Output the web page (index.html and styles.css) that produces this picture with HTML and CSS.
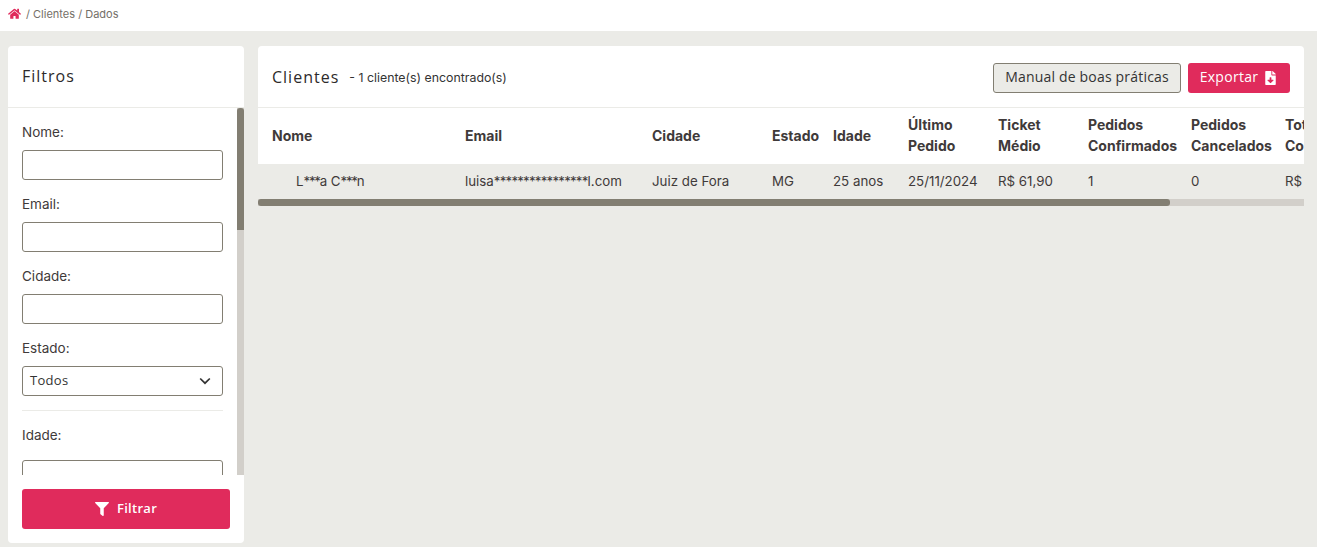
FILE: index.html
```html
<!DOCTYPE html>
<html lang="pt-BR">
<head>
<meta charset="utf-8">
<title>Clientes / Dados</title>
<link rel="stylesheet" href="styles.css">
</head>
<body>
<nav class="crumbs">
  <svg class="home" viewBox="0 0 576 512"><path d="M280.37 148.26L96 300.11V464a16 16 0 0 0 16 16l112.06-.29a16 16 0 0 0 15.92-16V368a16 16 0 0 1 16-16h64a16 16 0 0 1 16 16v95.64a16 16 0 0 0 16 16.05L464 480a16 16 0 0 0 16-16V300L295.67 148.26a12.19 12.19 0 0 0-15.3 0zM571.6 251.47L488 182.56V44.05a12 12 0 0 0-12-12h-56a12 12 0 0 0-12 12v72.61L318.47 43a48 48 0 0 0-61 0L4.34 251.47a12 12 0 0 0-1.6 16.9l25.5 31A12 12 0 0 0 45.15 301l235.22-193.74a12.19 12.19 0 0 1 15.3 0L530.9 301a12 12 0 0 0 16.9-1.6l25.5-31a12 12 0 0 0-1.7-16.93z"/></svg>
  <span>/ Clientes / Dados</span>
</nav>
<div class="layout">
  <aside class="filters">
    <h2 class="filters-title">Filtros</h2>
    <div class="filters-body">
      <form class="filters-form">
        <label class="field"><span>Nome:</span><input type="text"></label>
        <label class="field"><span>Email:</span><input type="text"></label>
        <label class="field"><span>Cidade:</span><input type="text"></label>
        <label class="field"><span>Estado:</span>
          <div class="select">Todos
            <svg viewBox="0 0 12 8"><path d="M1.2 1.5L6 6.2l4.8-4.7" fill="none" stroke="currentColor" stroke-width="1.7"/></svg>
          </div>
        </label>
        <hr class="divider">
        <label class="field field-age"><span>Idade:</span><input type="text"></label>
      </form>
      <div class="vbar"><div class="vbar-thumb"></div></div>
    </div>
    <div class="filters-foot">
      <button class="btn-primary btn-filter" type="button">
        <svg viewBox="0 0 512 512"><path d="M487.976 0H24.028C2.71 0-8.047 25.866 7.058 40.971L192 225.941V432c0 7.831 3.821 15.17 10.237 19.662l80 55.98C298.02 518.69 320 507.493 320 487.98V225.941l184.947-184.97C520.021 25.896 509.338 0 487.976 0z"/></svg>
        Filtrar
      </button>
    </div>
  </aside>
  <main class="content">
    <header class="content-head">
      <h1 class="content-title">Clientes</h1>
      <span class="content-count">- 1 cliente(s) encontrado(s)</span>
      <div class="actions">
        <button class="btn-outline" type="button">Manual de boas práticas</button>
        <button class="btn-primary btn-export" type="button">Exportar
          <svg viewBox="0 0 384 512"><path d="M224 136V0H24C10.7 0 0 10.7 0 24v464c0 13.3 10.7 24 24 24h336c13.3 0 24-10.7 24-24V160H248c-13.2 0-24-10.8-24-24zm76.45 211.36l-96.42 95.7c-6.65 6.61-17.39 6.61-24.04 0l-96.42-95.7C73.42 337.29 80.54 320 94.82 320H160v-80c0-8.84 7.16-16 16-16h32c8.84 0 16 7.16 16 16v80h65.18c14.28 0 21.4 17.29 11.27 27.36zM377 105L279.1 7c-4.5-4.5-10.6-7-17-7H256v128h128v-6.1c0-6.3-2.5-12.4-7-16.9z"/></svg>
        </button>
      </div>
    </header>
    <div class="table-wrap">
      <table class="clients">
        <colgroup>
          <col class="c1"><col class="c2"><col class="c3"><col class="c4"><col class="c5">
          <col class="c6"><col class="c7"><col class="c8"><col class="c9"><col class="c10">
        </colgroup>
        <thead>
          <tr>
            <th>Nome</th><th>Email</th><th>Cidade</th><th>Estado</th><th>Idade</th>
            <th>Último<br>Pedido</th><th>Ticket<br>Médio</th><th>Pedidos<br>Confirmados</th><th>Pedidos<br>Cancelados</th><th>Total<br>Compras</th>
          </tr>
        </thead>
        <tbody>
          <tr>
            <td class="name">L<span class="mask">***</span>a C<span class="mask">***</span>n</td><td>luisa<span class="mask">****************</span>l.com</td><td>Juiz de Fora</td><td>MG</td><td>25 anos</td>
            <td>25/11/2024</td><td>R$ 61,90</td><td>1</td><td>0</td><td>R$ 61,90</td>
          </tr>
        </tbody>
      </table>
    </div>
    <div class="hbar"><div class="hbar-thumb"></div></div>
  </main>
</div>
</body>
</html>
```

FILE: styles.css
```css
* { box-sizing: border-box; }
html, body { height: 100%; }
body {
  margin: 0;
  background: #ebebe7;
  color: #3f3a3a;
  font-family: Inter, "Liberation Sans", sans-serif;
  font-size: 13px;
  overflow: hidden;
}
.crumbs {
  height: 31px;
  background: #fff;
  display: flex;
  align-items: center;
  gap: 5px;
  padding: 0 8px 3px;
  font-size: 11px;
  color: #746f68;
}
.home { width: 13px; height: 11.5px; fill: #e02b5c; }
.layout {
  display: flex;
  align-items: flex-start;
  gap: 14px;
  padding: 15px 13px 0 8px;
}
.filters {
  width: 236px;
  height: 497px;
  flex: none;
  background: #fff;
  border-radius: 4px;
  display: flex;
  flex-direction: column;
  overflow: hidden;
}
.filters-title {
  margin: 0;
  height: 62px;
  padding: 0 14px 2px;
  display: flex;
  align-items: center;
  border-bottom: 1px solid #ebebe7;
  font-family: "Open Sans", sans-serif;
  font-size: 16px;
  font-weight: 400;
  letter-spacing: 1px;
  color: #2d2a2a;
}
.filters-body { height: 367px; display: flex; }
.filters-form { flex: 1; min-width: 0; overflow: hidden; padding: 15px 14px 0; }
.vbar { width: 7px; flex: none; background: #d2cfca; }
.vbar-thumb { height: 122px; background: #827e72; border-radius: 3px 3px 0 0; }
.field { display: block; margin-bottom: 15px; }
.field span { display: block; height: 18px; line-height: 18px; margin-bottom: 9px; font-size: 13.5px; }
.field input, .select {
  display: block;
  width: 100%;
  height: 30px;
  border: 1px solid #827e72;
  border-radius: 3px;
  background: #fff;
  padding: 0 7px;
}
.select {
  display: flex;
  align-items: center;
  justify-content: space-between;
  padding: 0 11px 2px 7px;
  font-family: "Open Sans", sans-serif;
  letter-spacing: .3px;
  color: #333;
}
.select svg { width: 12px; height: 8px; color: #333; margin-top: 2px; }
.divider { border: 0; border-top: 1px solid #ebebe7; margin: -1px 0 15px; }
.field-age span { margin-bottom: 16px; }
.filters-foot { padding: 14px; flex: 1; }
.btn-primary {
  border: 0;
  border-radius: 3px;
  background: #e02b5c;
  color: #fff;
  display: flex;
  align-items: center;
  justify-content: center;
  font-family: "Open Sans", sans-serif;
  font-size: 14px;
  letter-spacing: .3px;
}
.btn-filter { width: 208px; height: 40px; gap: 8px; font-weight: 600; font-size: 13px; padding: 0 0 3px; }
.btn-filter svg { width: 14px; height: 14px; fill: #fff; margin-top: 2px; }
.content {
  flex: 1;
  min-width: 0;
  border-radius: 4px 4px 0 0;
  overflow: hidden;
}
.content-head {
  height: 62px;
  background: #fff;
  border-bottom: 1px solid #ebebe7;
  display: flex;
  align-items: center;
  padding: 0 14px;
}
.content-title {
  margin: 0 10px 0 0;
  font-family: "Open Sans", sans-serif;
  font-size: 16px;
  font-weight: 400;
  letter-spacing: 1px;
  color: #2d2a2a;
}
.content-count { font-size: 12.35px; color: #333; margin-top: 2px; }
.actions { margin: 3px 0 0 auto; display: flex; gap: 7px; }
.btn-outline {
  height: 30px;
  width: 188px;
  padding: 0 0 3px;
  border: 1px solid #827e72;
  border-radius: 3px;
  background: #ebebe7;
  color: #333;
  font-family: "Open Sans", sans-serif;
  font-size: 14px;
  letter-spacing: .19px;
}
.btn-export { width: 102px; height: 30px; gap: 7px; padding: 0 2px 3px 0; }
.btn-export svg { width: 11px; height: 14px; fill: #fff; margin-top: 2px; }
.table-wrap { overflow: hidden; }
.clients { width: 1200px; table-layout: fixed; border-collapse: collapse; }
.c1 { width: 193px; }
.c2 { width: 187px; }
.c3 { width: 120px; }
.c4 { width: 61px; }
.c5 { width: 75px; }
.c6 { width: 90px; }
.c7 { width: 90px; }
.c8 { width: 103px; }
.c9 { width: 94px; }
.c10 { width: 187px; }
.clients th, .clients td {
  padding: 0 0 0 14px;
  text-align: left;
  white-space: nowrap;
}
.clients th {
  height: 56px;
  padding-bottom: 2px;
  background: #fff;
  font-size: 14px;
  font-weight: 700;
  line-height: 21px;
}
.clients td { height: 35px; padding-bottom: 1px; font-size: 13.3px; }
.clients td.name { padding-left: 38px; }
.mask { letter-spacing: -.8px; }
.name .mask { letter-spacing: -1.3px; }
.hbar { height: 7px; background: #d2cfca; }
.hbar-thumb { width: 912px; height: 100%; background: #827e72; border-radius: 3px; }
```
